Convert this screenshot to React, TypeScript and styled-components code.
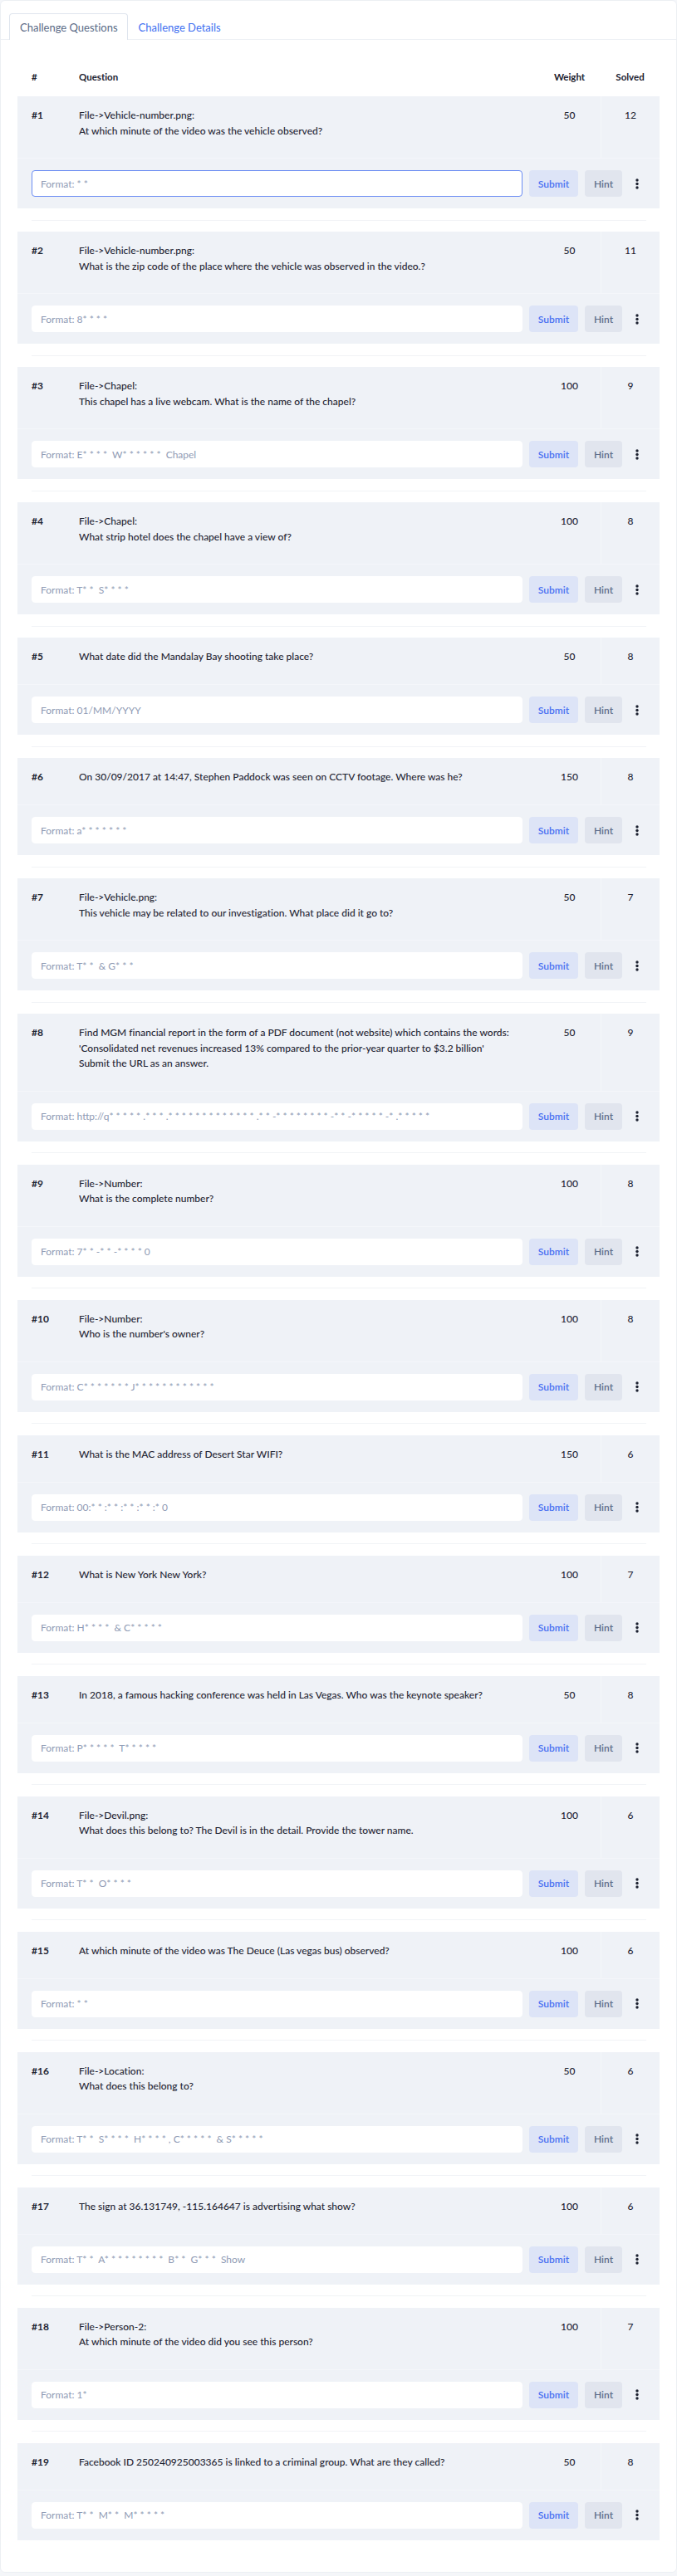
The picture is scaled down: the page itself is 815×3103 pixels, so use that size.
import React from "react";
import styled, { createGlobalStyle } from "styled-components";

const GlobalStyle = createGlobalStyle`
  html, body {
    margin: 0;
    padding: 0;
    background: #f4f6f9;
  }
  body {
    font-family: "Lato", "Liberation Sans", sans-serif;
    font-variant-ligatures: none;
    color: #1e2433;
  }
  * { box-sizing: border-box; }
`;

type Question = {
  id: number;
  lines: string[];
  weight: number;
  solved: number;
  format: string;
};

const questions: Question[] = [
  { id: 1, lines: ["File->Vehicle-number.png:", "At which minute of the video was the vehicle observed?"], weight: 50, solved: 12, format: "Format: * *" },
  { id: 2, lines: ["File->Vehicle-number.png:", "What is the zip code of the place where the vehicle was observed in the video.?"], weight: 50, solved: 11, format: "Format: 8* * * *" },
  { id: 3, lines: ["File->Chapel:", "This chapel has a live webcam. What is the name of the chapel?"], weight: 100, solved: 9, format: "Format: E* * * *  W* * * * * *  Chapel" },
  { id: 4, lines: ["File->Chapel:", "What strip hotel does the chapel have a view of?"], weight: 100, solved: 8, format: "Format: T* *  S* * * *" },
  { id: 5, lines: ["What date did the Mandalay Bay shooting take place?"], weight: 50, solved: 8, format: "Format: 01/MM/YYYY" },
  { id: 6, lines: ["On 30/09/2017 at 14:47, Stephen Paddock was seen on CCTV footage. Where was he?"], weight: 150, solved: 8, format: "Format: a* * * * * * *" },
  { id: 7, lines: ["File->Vehicle.png:", "This vehicle may be related to our investigation. What place did it go to?"], weight: 50, solved: 7, format: "Format: T* *  & G* * *" },
  {
    id: 8,
    lines: [
      "Find MGM financial report in the form of a PDF document (not website) which contains the words:",
      "'Consolidated net revenues increased 13% compared to the prior-year quarter to $3.2 billion'",
      "Submit the URL as an answer.",
    ],
    weight: 50,
    solved: 9,
    format: "Format: http://q* * * * * .* * * .* * * * * * * * * * * * * .* * -* * * * * * * * -* * -* * * * * -* .* * * * *",
  },
  { id: 9, lines: ["File->Number:", "What is the complete number?"], weight: 100, solved: 8, format: "Format: 7* * -* * -* * * * 0" },
  { id: 10, lines: ["File->Number:", "Who is the number's owner?"], weight: 100, solved: 8, format: "Format: C* * * * * * * J* * * * * * * * * * * *" },
  { id: 11, lines: ["What is the MAC address of Desert Star WIFI?"], weight: 150, solved: 6, format: "Format: 00:* * :* * :* * :* * :* 0" },
  { id: 12, lines: ["What is New York New York?"], weight: 100, solved: 7, format: "Format: H* * * *  & C* * * * *" },
  { id: 13, lines: ["In 2018, a famous hacking conference was held in Las Vegas. Who was the keynote speaker?"], weight: 50, solved: 8, format: "Format: P* * * * *  T* * * * *" },
  { id: 14, lines: ["File->Devil.png:", "What does this belong to? The Devil is in the detail. Provide the tower name."], weight: 100, solved: 6, format: "Format: T* *  O* * * *" },
  { id: 15, lines: ["At which minute of the video was The Deuce (Las vegas bus) observed?"], weight: 100, solved: 6, format: "Format: * *" },
  { id: 16, lines: ["File->Location:", "What does this belong to?"], weight: 50, solved: 6, format: "Format: T* *  S* * * *  H* * * * , C* * * * *  & S* * * * *" },
  { id: 17, lines: ["The sign at 36.131749, -115.164647 is advertising what show?"], weight: 100, solved: 6, format: "Format: T* *  A* * * * * * * * *  B* *  G* * *  Show" },
  { id: 18, lines: ["File->Person-2:", "At which minute of the video did you see this person?"], weight: 100, solved: 7, format: "Format: 1*" },
  { id: 19, lines: ["Facebook ID 250240925003365 is linked to a criminal group. What are they called?"], weight: 50, solved: 8, format: "Format: T* *  M* *  M* * * * *" },
];

const Card = styled.div`
  background: #ffffff;
  border: 1px solid #eceff3;
  border-radius: 6px;
  min-height: 3099px;
  padding-bottom: 31px;
`;

const TabBar = styled.div`
  display: flex;
  padding: 15px 0 0 10px;
  border-bottom: 1px solid #edf0f4;
`;

const Tab = styled.div<{ $active?: boolean }>`
  height: 32px;
  display: flex;
  align-items: center;
  padding: 0 11px 0 12px;
  font-size: 13px;
  margin-bottom: -1px;
  border: 1px solid ${(p) => (p.$active ? "#dfe5ee" : "transparent")};
  border-bottom: none;
  border-radius: 4px 4px 0 0;
  background: ${(p) => (p.$active ? "#ffffff" : "transparent")};
  color: ${(p) => (p.$active ? "#5a6a86" : "#3e6ff1")};
`;

const Table = styled.div`
  padding: 0 20px 0 20px;
`;

const HeadRow = styled.div`
  display: grid;
  grid-template-columns: 74px 1fr 75px 71px;
  padding: 36px 0 14px;
  font-size: 11.5px;
  font-weight: 700;
  line-height: 18px;
  color: #1b2130;
`;

const HeadCell = styled.div<{ $center?: boolean; $pad?: boolean }>`
  text-align: ${(p) => (p.$center ? "center" : "left")};
  padding-left: ${(p) => (p.$pad ? "17px" : "0")};
`;

const Item = styled.div`
  background: #eff2f7;
`;

const QuestionRow = styled.div`
  display: grid;
  grid-template-columns: 74px 1fr 75px 71px;
  min-height: 57px;
  border-bottom: 1px solid #f4f6fa;
  font-size: 12px;
  font-weight: 500;
  line-height: 18.5px;
  color: #1f2533;
`;

const Cell = styled.div<{ $center?: boolean }>`
  padding: 14px 0 23px;
  text-align: ${(p) => (p.$center ? "center" : "left")};
`;

const NumCell = styled(Cell)`
  padding-left: 17px;
  font-weight: 700;
`;

const SolvedCell = styled(Cell)`
  border-left: 1px solid #f4f6fa;
`;

const AnswerRow = styled.div`
  display: flex;
  align-items: center;
  gap: 8px;
  padding: 14px 17px 14px 17px;
`;

const Input = styled.input<{ $focus?: boolean }>`
  flex: 1;
  min-width: 0;
  height: 32px;
  border-radius: 4px;
  border: 1px solid ${(p) => (p.$focus ? "#6a8cf3" : "#ffffff")};
  background: #ffffff;
  padding: 0 10px;
  font-family: inherit;
  font-size: 12px;
  outline: none;
  &::placeholder {
    color: #8f9bb5;
  }
`;

const Button = styled.button<{ $kind: "submit" | "hint" }>`
  height: 32px;
  border: none;
  border-radius: 4px;
  font-family: inherit;
  font-size: 12px;
  font-weight: 600;
  padding: 0;
  width: ${(p) => (p.$kind === "submit" ? "59px" : "45px")};
  background: ${(p) => (p.$kind === "submit" ? "#dde4f7" : "#e1e5ee")};
  color: ${(p) => (p.$kind === "submit" ? "#4a70f2" : "#5f6e8b")};
`;

const Kebab = styled.div`
  width: 20px;
  height: 32px;
  display: flex;
  align-items: center;
  justify-content: center;
`;

const Spacer = styled.div`
  height: 28px;
  display: flex;
  align-items: center;
  padding: 0 16px 0 17px;
  &::after {
    content: "";
    flex: 1;
    height: 1px;
    background: #f1f3f6;
  }
`;

const Dots = () => (
  <svg width="4" height="13" viewBox="0 0 4 13">
    <circle cx="2" cy="2" r="1.7" fill="#1c2130" />
    <circle cx="2" cy="6.5" r="1.7" fill="#1c2130" />
    <circle cx="2" cy="11" r="1.7" fill="#1c2130" />
  </svg>
);

export const App = () => {
  return (
    <>
      <GlobalStyle />
      <Card>
        <TabBar>
          <Tab $active>Challenge Questions</Tab>
          <Tab>Challenge Details</Tab>
        </TabBar>
        <Table>
          <HeadRow>
            <HeadCell $pad>#</HeadCell>
            <HeadCell>Question</HeadCell>
            <HeadCell $center>Weight</HeadCell>
            <HeadCell $center>Solved</HeadCell>
          </HeadRow>
          {questions.map((q, n) => (
            <React.Fragment key={q.id}>
              <Item>
                <QuestionRow>
                  <NumCell>#{q.id}</NumCell>
                  <Cell>
                    {q.lines.map((l, i) => (
                      <div key={i}>{l}</div>
                    ))}
                  </Cell>
                  <Cell $center>{q.weight}</Cell>
                  <SolvedCell $center>{q.solved}</SolvedCell>
                </QuestionRow>
                <AnswerRow>
                  <Input placeholder={q.format} $focus={n === 0} />
                  <Button $kind="submit">Submit</Button>
                  <Button $kind="hint">Hint</Button>
                  <Kebab>
                    <Dots />
                  </Kebab>
                </AnswerRow>
              </Item>
              {n < questions.length - 1 && <Spacer />}
            </React.Fragment>
          ))}
        </Table>
      </Card>
    </>
  );
};

export default App;
